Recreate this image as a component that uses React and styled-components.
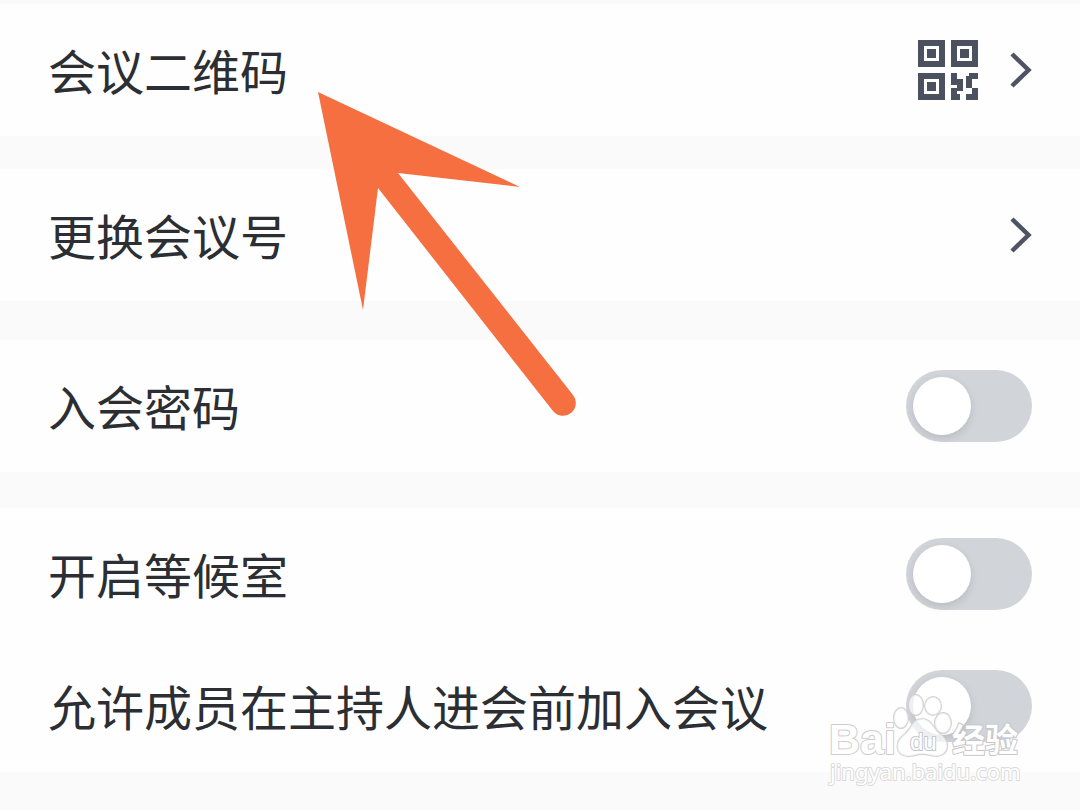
import React from "react";
import styled, { createGlobalStyle } from "styled-components";

const GlobalStyle = createGlobalStyle`
  *, *::before, *::after { box-sizing: border-box; }
  body {
    margin: 0;
    background: #fafafa;
    font-family: "Noto Sans CJK SC", sans-serif;
    color: #2b2e33;
  }
`;

const Page = styled.main`
  position: relative;
  min-height: 100vh;
  overflow: hidden;
  padding-top: 4px;
`;

const Group = styled.section`
  background: #fefefe;
  margin-bottom: ${(p) => p.$gap}px;
`;

const rowStyles = `
  display: flex;
  align-items: center;
  justify-content: space-between;
  width: 100%;
  height: 132px;
  padding: 0 48px;
  border: 0;
  background: transparent;
  color: inherit;
  font: inherit;
  text-align: left;
  cursor: pointer;
`;

const LinkRow = styled.button`${rowStyles}`;
const SwitchRow = styled.label`${rowStyles}`;

const Title = styled.span`
  padding-bottom: 2px;
  font-size: 48px;
  line-height: 72px;
  white-space: nowrap;
`;

const Trailing = styled.span`
  display: flex;
  align-items: center;
  gap: 32px;
`;

const Switch = styled.input`
  appearance: none;
  flex: none;
  width: 126px;
  height: 72px;
  margin: 0;
  padding: 7px;
  border-radius: 36px;
  background: #d1d4d9;
  cursor: pointer;

  &::before {
    content: "";
    display: block;
    width: 58px;
    height: 58px;
    border-radius: 50%;
    background: #fff;
    box-shadow: 0 3px 8px rgba(0, 0, 0, 0.12);
  }

  &:checked { background: #2d7bf6; }
  &:checked::before { margin-left: 54px; }
`;

const Pointer = styled.svg`
  position: absolute;
  left: 318px;
  top: 92px;
  pointer-events: none;
`;

const Watermark = styled.div`
  position: absolute;
  right: 48px;
  top: 690px;
  width: 206px;
  height: 104px;
  pointer-events: none;
`;

const Chevron = () => (
  <svg width="22" height="36" viewBox="0 0 22 36" fill="none" aria-hidden="true">
    <path d="M2 2L18.5 18L2 34" stroke="#4e5463" strokeWidth="4.5" />
  </svg>
);

const QrCode = () => (
  <svg width="60" height="60" viewBox="0 0 60 60" fill="#4c5160" aria-hidden="true">
    <path fillRule="evenodd" d="M0 0h27v27H0zM6 6v15h15V6zM9 9h9v9H9z" />
    <path fillRule="evenodd" d="M33 0h27v27H33zM39 6v15h15V6zM42 9h9v9h-9z" />
    <path fillRule="evenodd" d="M0 33h27v27H0zM6 39v15h15V39zM9 42h9v9H9z" />
    <path d="M33 33h6v6h6v12h-6v3h3v6h-9V48h6v-3h-6z" />
    <path d="M51 33h9v6h-6v9h-6V36h3zM54 48h6v12H48v-6h6z" />
  </svg>
);

const Arrow = () => (
  <Pointer width="260" height="325" viewBox="0 0 260 325" aria-hidden="true">
    <path
      d="M0 0L202 95L80 81L255 303A12.5 12.5 0 0 1 235 319L60 96L45 218Z"
      fill="#f66f40"
    />
  </Pointer>
);

const BaiduMark = () => (
  <Watermark>
    <svg
      width="206"
      height="104"
      viewBox="0 0 206 104"
      fill="#fff"
      stroke="#cdcdcd"
      strokeWidth="2"
      strokeLinejoin="round"
      paintOrder="stroke"
    >
      <g fillOpacity="0.7" stroke="#d2d2d2">
        <ellipse cx="75" cy="28" rx="7" ry="10" />
        <ellipse cx="90" cy="15" rx="7" ry="10" />
        <ellipse cx="107" cy="16" rx="8" ry="9" />
        <ellipse cx="117" cy="33" rx="8" ry="10" />
        <path d="M96 29C87 29 86 38 79 44C69 51 68 65 82 66C89 66 90 64 96 64C103 64 105 66 111 66C122 65 125 53 115 45C107 39 106 29 96 29Z" />
      </g>
      <g fontFamily="Liberation Sans, sans-serif">
        <text x="3" y="64" fontSize="43" fontWeight="700">Bai</text>
        <text x="84" y="60" fontSize="24" stroke="#c4c6c9">du</text>
      </g>
      <text x="126" y="62" fontSize="33" fontWeight="700" fontFamily="Noto Sans CJK SC, sans-serif" stroke="#c4c6c9">经验</text>
      <text x="4" y="90" fontSize="22" fontFamily="Noto Sans, sans-serif" stroke="#dadada">jingyan.baidu.com</text>
    </svg>
  </Watermark>
);

const Toggle = ({ children }) => (
  <SwitchRow>
    <Title>{children}</Title>
    <Switch type="checkbox" role="switch" />
  </SwitchRow>
);

export default function App() {
  return (
    <Page>
      <GlobalStyle />
      <Group $gap={33}>
        <LinkRow type="button">
          <Title>会议二维码</Title>
          <Trailing>
            <QrCode />
            <Chevron />
          </Trailing>
        </LinkRow>
      </Group>
      <Group $gap={39}>
        <LinkRow type="button">
          <Title>更换会议号</Title>
          <Chevron />
        </LinkRow>
      </Group>
      <Group $gap={36}>
        <Toggle>入会密码</Toggle>
      </Group>
      <Group $gap={36}>
        <Toggle>开启等候室</Toggle>
        <Toggle>允许成员在主持人进会前加入会议</Toggle>
      </Group>
      <Arrow />
      <BaiduMark />
    </Page>
  );
}
